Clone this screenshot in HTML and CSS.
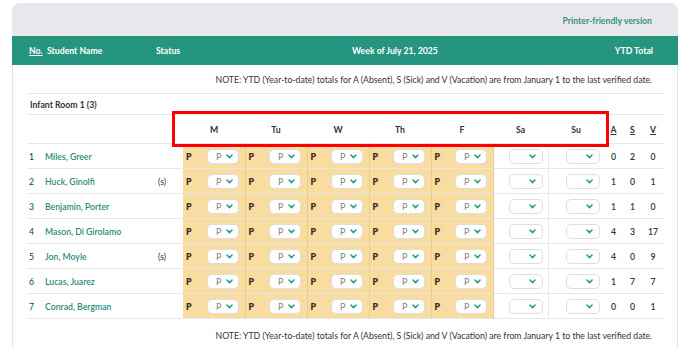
FILE: index.html
```html
<!DOCTYPE html>
<html lang="en">

<head>
    <meta charset="UTF-8">
    <meta name="viewport" content="width=device-width, initial-scale=1.0">
    <title>Weekly Attendance</title>
    <link rel="stylesheet" href="styles.css">
</head>

<body>
    <div class="card">
        <div class="card-top">
            <a class="print-link" href="#">Printer-friendly version</a>
        </div>

        <!-- Заголовок таблицы -->
        <div class="head-bar">
            <span class="h-no">No.</span>
            <span class="h-name">Student Name</span>
            <span class="h-status">Status</span>
            <span class="h-week">Week of July 21, 2025</span>
            <span class="h-ytd">YTD Total</span>
        </div>

        <div class="content">
            <table class="grid">
                <colgroup>
                    <col style="width:16px">
                    <col style="width:110px">
                    <col style="width:30px">
                    <col style="width:62px">
                    <col style="width:62px">
                    <col style="width:62px">
                    <col style="width:62px">
                    <col style="width:62px">
                    <col style="width:55px">
                    <col style="width:56px">
                    <col style="width:19px">
                    <col style="width:19px">
                    <col style="width:22px">
                </colgroup>
                <tr class="note-row">
                    <td colspan="13">NOTE: YTD (Year-to-date) totals for A (Absent), S (Sick) and V (Vacation) are from January 1 to the last verified date.</td>
                </tr>
                <tr class="group-row">
                    <td colspan="13">Infant Room 1 (3)</td>
                </tr>
                <tr class="days-row">
                    <td></td>
                    <td></td>
                    <td></td>
                    <td>M</td>
                    <td>Tu</td>
                    <td>W</td>
                    <td>Th</td>
                    <td>F</td>
                    <td>Sa</td>
                    <td>Su</td>
                    <td class="tot"><u>A</u></td>
                    <td class="tot"><u>S</u></td>
                    <td class="tot"><u>V</u></td>
                </tr>
            </table>
        </div>
    </div>

    <!-- Красная рамка поверх заголовков дней -->
    <div class="mark"></div>

    <script>
        // Список детей и их итоги за год
        const kids = [
            ['Miles, Greer', '', 0, 2, 0],
            ['Huck, Ginolfi', '(s)', 1, 0, 1],
            ['Benjamin, Porter', '', 1, 1, 0],
            ['Mason, Di Girolamo', '', 4, 3, 17],
            ['Jon, Moyle', '(s)', 4, 0, 9],
            ['Lucas, Juarez', '', 1, 7, 7],
            ['Conrad, Bergman', '', 0, 0, 1]
        ];

        const chevron = '<svg class="chev" width="7" height="5" viewBox="0 0 7 5"><polyline points="1,1 3.5,3.6 6,1" fill="none" stroke="#26a08b" stroke-width="1.6" stroke-linecap="round" stroke-linejoin="round"/></svg>';

        const table = document.querySelector('.grid');

        kids.forEach((k, i) => {
            const tr = document.createElement('tr');
            tr.className = 'kid-row';
            let html = '<td class="num">' + (i + 1) + '</td>';
            html += '<td class="name">' + k[0] + '</td>';
            html += '<td class="status">' + k[1] + '</td>';
            // Будние дни
            for (let d = 0; d < 5; d++) {
                html += '<td class="day"><div class="day-in"><b>P</b><span class="pick"><span class="pick-val">P</span>' + chevron + '</span></div></td>';
            }
            // Выходные
            html += '<td class="wknd"><span class="pick pick-empty">' + chevron + '</span></td>';
            html += '<td class="wknd"><span class="pick pick-empty">' + chevron + '</span></td>';
            html += '<td class="tot">' + k[2] + '</td>';
            html += '<td class="tot">' + k[3] + '</td>';
            html += '<td class="tot">' + k[4] + '</td>';
            tr.innerHTML = html;
            table.appendChild(tr);
        });

        const note = document.createElement('tr');
        note.className = 'note-row note-bottom';
        note.innerHTML = '<td colspan="13">NOTE: YTD (Year-to-date) totals for A (Absent), S (Sick) and V (Vacation) are from January 1 to the last verified date.</td>';
        table.appendChild(note);
    </script>
</body>

</html>
```

FILE: styles.css
```css
html, body {
    margin: 0;
    padding: 0;
    background: #ffffff;
    font-family: Lato, "Open Sans", sans-serif;
    color: #333333;
    overflow: hidden;
}

.card {
    margin: 3px 10px 0 12px;
    width: 666px;
}

.card-top {
    background: #e8e9ed;
    height: 33px;
    border-radius: 8px 8px 0 0;
    display: flex;
    align-items: center;
    justify-content: flex-end;
    padding-right: 26px;
}

.print-link {
    color: #3b8f80;
    font-size: 8.7px;
    font-weight: 700;
    text-decoration: none;
    padding-top: 1px;
}

.head-bar {
    background: #26957f;
    height: 29px;
    display: flex;
    align-items: center;
    color: #ffffff;
    font-size: 8.7px;
    font-weight: 700;
    padding-left: 17px;
    padding-right: 25px;
}

.h-no {
    width: 18px;
    text-decoration: underline;
}

.h-name {
    width: 109px;
}

.h-status {
    width: 196px;
}

.h-week {
    flex: 1;
}

.content {
    background: #ffffff;
    border-left: 1px solid #e2e3e6;
    border-right: 1px solid #e2e3e6;
    padding: 0 13px 0 14px;
    height: 300px;
}

.grid {
    border-collapse: collapse;
    table-layout: fixed;
    width: 637px;
    font-size: 8.7px;
}

.grid td {
    padding: 0;
    white-space: nowrap;
    overflow: hidden;
}

.grid tr {
    border-bottom: 1px solid #e7e7e7;
}

.note-row td {
    height: 28px;
    text-align: right;
    padding-right: 12px;
}

.note-bottom {
    border-bottom: none !important;
}

.note-bottom td {
    height: 28px;
    padding-top: 2px;
}

.group-row td {
    height: 20px;
    font-weight: 700;
    padding-left: 3px;
}

.days-row td {
    height: 28px;
    font-weight: 700;
    text-align: center;
}

.days-row .tot {
    text-align: center;
}

.kid-row td {
    height: 24px;
}

.num {
    padding-left: 2px !important;
}

.name {
    color: #2b8a7c;
    font-weight: 600;
    padding-left: 2px !important;
}

.status {
    padding-left: 5px !important;
}

.day {
    background: #f8dca0;
    border-right: 1px solid #ebcd8e;
}

.kid-row {
    border-bottom-color: #ececec;
}

.day-in {
    display: flex;
    align-items: center;
    justify-content: space-between;
    padding: 0 6px 0 3px;
}

.day-in b {
    color: #3a3020;
    font-weight: 800;
}

/* Поле выбора */
.pick {
    display: inline-flex;
    align-items: center;
    justify-content: flex-end;
    width: 32px;
    height: 15px;
    box-sizing: border-box;
    background: #ffffff;
    border: 1px solid #dedede;
    border-radius: 5px;
    padding-right: 5px;
    vertical-align: middle;
}

.pick-val {
    color: #8a7f79;
    font-size: 9px;
    margin-right: 4px;
}

.pick-empty {
    width: 34px;
    padding-right: 6px;
}

.wknd {
    text-align: right;
    padding-right: 5px !important;
}

.wknd + .wknd {
    border-left: 1px solid #e9e9e9;
    padding-right: 4px !important;
}

.tot {
    text-align: center;
    font-weight: 600;
}

.mark {
    position: absolute;
    left: 172px;
    top: 111px;
    width: 437px;
    height: 36px;
    box-sizing: border-box;
    border: 3px solid #ff0000;
}
```
